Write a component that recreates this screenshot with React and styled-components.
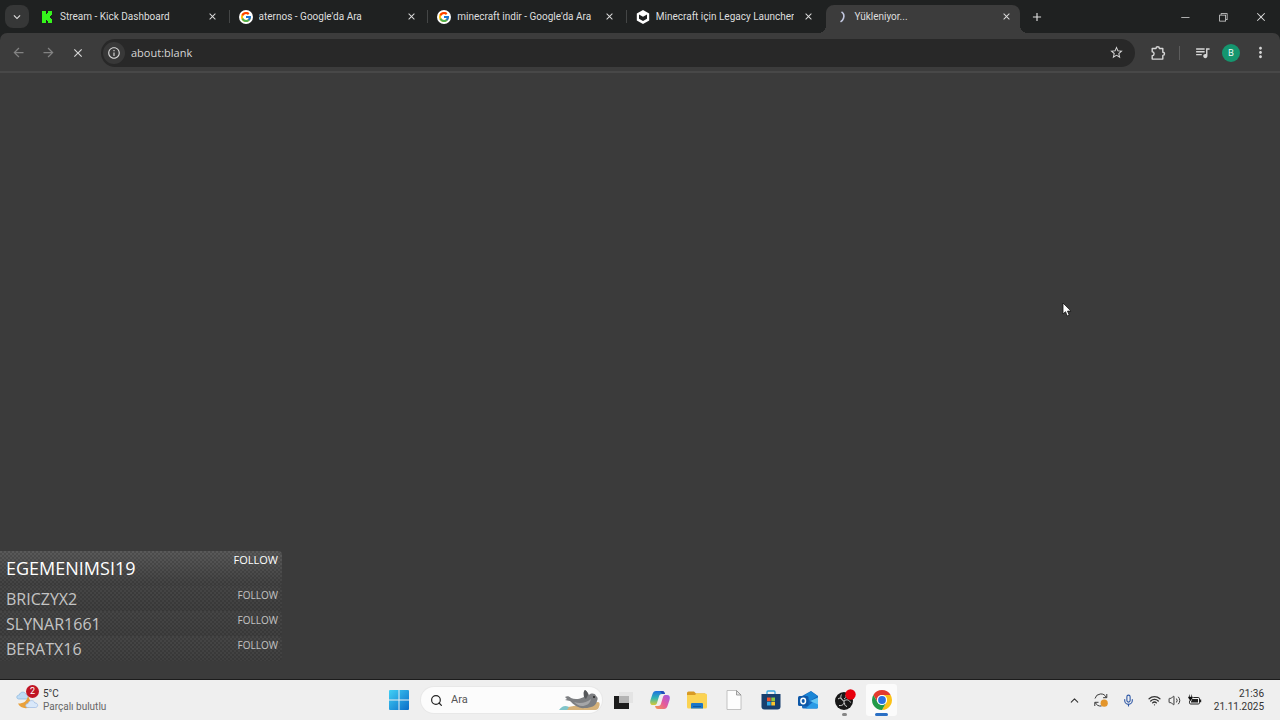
import styled, { createGlobalStyle, css } from "styled-components";
import { FcGoogle } from "react-icons/fc";
import {
    MdArrowBack,
    MdArrowForward,
    MdClose,
    MdInfoOutline,
    MdKeyboardArrowDown,
    MdMoreVert,
    MdAdd,
    MdQueueMusic,
    MdStarBorder,
} from "react-icons/md";
import { VscChromeClose, VscChromeMinimize, VscChromeRestore } from "react-icons/vsc";
import { ChevronUp, Mic, Search, Volume2, Wifi } from "lucide-react";

const tabs = [
    { title: "Stream - Kick Dashboard", icon: "kick" },
    { title: "aternos - Google'da Ara", icon: "google" },
    { title: "minecraft indir - Google'da Ara", icon: "google" },
    { title: "Minecraft için Legacy Launcher", icon: "legacy" },
    { title: "Yükleniyor...", icon: "spinner", active: true },
];

const events = [
    { name: "EGEMENIMSI19", latest: true },
    { name: "BRICZYX2" },
    { name: "SLYNAR1661" },
    { name: "BERATX16" },
];

function Favicon({ icon }) {
    if (icon === "kick") {
        return (
            <svg width="14" height="14" viewBox="0 0 14 14">
                <path fill="#35f41c" d="M2 1h4v3h1V3h1V1h4v4h-1v1h-1v2h1v1h1v4H8v-2H7v-1H6v3H2z" />
            </svg>
        );
    }
    if (icon === "google") {
        return <GoogleBadge><FcGoogle size={12} /></GoogleBadge>;
    }
    if (icon === "legacy") {
        return (
            <svg width="14" height="14" viewBox="0 0 14 14">
                <path fill="#fff" d="M7 0l6.2 3.5v7L7 14 .8 10.5v-7z" />
                <path fill="#1f2121" d="M3 4.600l4 2.200 4-2.200v4.200l-4 2.300-4-2.300z" />
            </svg>
        );
    }
    return (
        <svg width="14" height="14" viewBox="0 0 14 14">
            <path fill="none" stroke="#c3c8e0" strokeWidth="1.6" d="M7.5 1.8c2.3 1.5 2.8 4 2 6.4-.5 1.7-1.6 2.9-3 3.7" />
        </svg>
    );
}

function PuzzleIcon() {
    return (
        <svg width="16" height="16" viewBox="0 0 16 16">
            <path
                fill="none"
                stroke="currentColor"
                strokeWidth="1.400"
                strokeLinejoin="round"
                d="M2.200 3.500H6c0-2.300 3.400-2.300 3.400 0h3.400v3.700c2.300 0 2.300 3.200 0 3.200v3.700H2.200v-3.400c2.500-.2 2.500-3.700 0-3.900z"
            />
        </svg>
    );
}

function WeatherIcon() {
    return (
        <svg width="24" height="26" viewBox="0 0 24 26">
            <path fill="#bfdcf5" stroke="#8ab6de" strokeWidth=".7" d="M2.500 12C0 11.600.3 8 3.300 8 4 4.500 9 4 10 7.500c3 0 3 4.500 0 4.500z" />
            <path fill="#e9a13c" d="M12 9c-1 5-4 7.500-10 7.500 2.500 5.500 11 6.500 14 1z" />
            <path fill="#d9e8fa" stroke="#9cb9e2" strokeWidth=".7" d="M11.500 20.500c-2.700-.3-2.300-4 .5-4 .8-3.800 6-3.800 6.800-.5 3.700-.3 3.700 4.300.7 4.500z" />
        </svg>
    );
}

function WindowsIcon() {
    return (
        <svg width="20" height="20" viewBox="0 0 20 20">
            <defs>
                <linearGradient id="win" x1="0" y1="0" x2="20" y2="20" gradientUnits="userSpaceOnUse">
                    <stop stopColor="#41d0f5" />
                    <stop offset="1" stopColor="#0a6cc8" />
                </linearGradient>
            </defs>
            <path fill="url(#win)" d="M1 0h8.500v9.500H0V1q0-1 1-1zM10.500 0H19q1 0 1 1v8.500h-9.500zM0 10.500h9.500V20H1q-1 0-1-1zM10.500 10.500H20V19q0 1-1 1h-8.500z" />
        </svg>
    );
}

function SealIcon() {
    return (
        <svg width="42" height="24" viewBox="0 0 42 24">
            <path fill="#d6b27a" d="M3 21c7-3 20-4 36-7 2 0 2 3 1 5-1 3-3 3-5 3H6z" />
            <path fill="#7fc4c9" d="M0 22c3-4 6-5 10-3l-2 3z" />
            <path fill="#7d7f82" d="M6 9c2-1 4-1 6 1 4 2 9 1 13-1 0-3-1-5 1-7 2 1 3 3 4 5 2-2 6-2 7 1 2 1 2 3 1 5-1 5-6 7-12 7-6 1-11-3-15-7L6 12l2-1z" />
            <path fill="#a5a6a8" d="M15 14c6 2 12 1 17-3-1 5-5 7-9 7-3 0-6-2-8-4z" />
            <path fill="#55575a" d="M25 9c0-3-1-5 1-7 2 1 3 3 3 5l-2 4z" />
            <circle cx="35" cy="9" r="1" fill="#222" />
        </svg>
    );
}

function TaskViewIcon() {
    return (
        <svg width="20" height="20" viewBox="0 0 20 20">
            <path fill="#1c1c1c" d="M1 6h15v13H1z" />
            <path fill="#e4e4e4" d="M6 2h14v11H6z" />
            <path fill="#b4b4b4" d="M6 6h10v7H6z" />
        </svg>
    );
}

function CopilotIcon() {
    return (
        <svg width="20" height="20" viewBox="0 0 20 20">
            <defs>
                <linearGradient id="copA" x1="0" y1="0" x2="0" y2="1">
                    <stop stopColor="#1f6fe0" />
                    <stop offset=".5" stopColor="#30b5b4" />
                    <stop offset="1" stopColor="#d7cb35" />
                </linearGradient>
                <linearGradient id="copB" x1="1" y1="0" x2="0" y2="1">
                    <stop stopColor="#9a5be8" />
                    <stop offset=".5" stopColor="#e55a9c" />
                    <stop offset="1" stopColor="#f39a4c" />
                </linearGradient>
            </defs>
            <path fill="url(#copA)" d="M6 1h6c2 0 2.400 1.200 3 3H12c-2 0-2.700 1-3.200 3L7 13c-.5 1.500-1.300 2-2.500 2H3c-3 0-3.200-2.500-2.500-5l2-6C3.200 2 4.200 1 6 1z" />
            <path fill="url(#copB)" d="M14 19H8c-2 0-2.400-1.200-3-3h3c2 0 2.700-1 3.200-3L13 7c.5-1.500 1.300-2 2.500-2H17c3 0 3.200 2.500 2.500 5l-2 6c-.7 2-1.700 3-3.500 3z" />
            <path fill="#214dbb" d="M10 1h2c2 0 2.400 1.200 3 3h-3z" />
        </svg>
    );
}

function FolderIcon() {
    return (
        <svg width="20" height="20" viewBox="0 0 20 20">
            <path fill="#d89a24" d="M0 3q0-1.500 1.500-1.500H7l2 2h9v6H0z" />
            <path fill="#fbd353" d="M0 5h8l1.500-1.500h9q1.500 0 1.500 1.500v12q0 1.500-1.500 1.500h-17Q0 18.500 0 17z" />
            <path fill="#1c77c9" d="M4 14q0-1 1-1h10q1 0 1 1v4.500H4z" />
            <path fill="#0f5a9e" d="M6 16h8v1H6z" />
        </svg>
    );
}

function FileIcon() {
    return (
        <svg width="20" height="20" viewBox="0 0 20 20">
            <path fill="#fdfdfd" stroke="#b5b5b5" strokeWidth=".8" d="M3 .5h9.500L17 5v14.500H3z" />
            <path fill="#e3e3e3" stroke="#8c8c8c" strokeWidth=".8" d="M12.500.5V5H17z" />
        </svg>
    );
}

function StoreIcon() {
    return (
        <svg width="20" height="20" viewBox="0 0 20 20">
            <path fill="none" stroke="#3aa8e0" strokeWidth="1.300" d="M6 4V2q0-1 1-1h6q1 0 1 1v2" />
            <path fill="#173f6e" d="M.5 4h19v12.500q0 3-3 3h-13q-3 0-3-3z" />
            <path fill="#f0522d" d="M6 7.500h3.700v3.700H6z" />
            <path fill="#8cc63e" d="M10.300 7.500H14v3.700h-3.700z" />
            <path fill="#2fa9e8" d="M6 11.800h3.700v3.700H6z" />
            <path fill="#fbc42c" d="M10.300 11.800H14v3.700h-3.700z" />
        </svg>
    );
}

function OutlookIcon() {
    return (
        <svg width="20" height="20" viewBox="0 0 20 20">
            <path fill="#1669bd" d="M4 6l9-5 7 5v11q0 1.500-1.500 1.500h-13Q4 18.500 4 17z" />
            <path fill="#1a86d6" d="M7 5l6-3.500L19.500 6 12 11z" />
            <path fill="#2b9be6" d="M20 7.500v9.500q0 1.500-1.500 1.500h-11z" />
            <path fill="#63c6f3" d="M20 7.500v7L12 11z" />
            <rect y="6" width="10.500" height="10" rx="1.500" fill="#0e58a8" />
            <ellipse cx="5.200" cy="11" rx="2.300" ry="2.700" fill="none" stroke="#fff" strokeWidth="1.500" />
        </svg>
    );
}

function ObsIcon() {
    return (
        <svg width="22" height="22" viewBox="0 0 22 22">
            <circle cx="10" cy="12" r="9" fill="#171717" />
            <g fill="none" stroke="#cfcfcf" strokeWidth="1">
                <path d="M10 12c-3-1-4-3.500-2.500-6.500" />
                <path d="M10 12c2.500-2 5.200-1.300 6.500 1.500" />
                <path d="M10 12c.5 3-1.500 5-5 4.500" />
                <path d="M4 10c1.500-1.500 3.500-1 4.500.5M12 6c.5 2-.5 3.500-2 4M13 17.500c-2-.5-2.800-2-2.300-3.700" />
            </g>
            <circle cx="16.500" cy="5.500" r="5.200" fill="#e8000d" />
        </svg>
    );
}

function ChromeIcon() {
    return (
        <svg width="20" height="20" viewBox="0 0 20 20">
            <path fill="#e33b2e" d="M1.340 5A10 10 0 0 1 18.660 5H10a5 5 0 0 0-4.330 7.500z" />
            <path fill="#fbc116" d="M18.660 5A10 10 0 0 1 10 20l4.330-7.500A5 5 0 0 0 10 5z" />
            <path fill="#229a48" d="M10 20A10 10 0 0 1 1.340 5l4.330 7.500a5 5 0 0 0 8.660 0z" />
            <circle cx="10" cy="10" r="5" fill="#fff" />
            <circle cx="10" cy="10" r="3.900" fill="#2c72e0" />
        </svg>
    );
}

function SyncIcon() {
    return (
        <svg width="16" height="16" viewBox="0 0 16 16">
            <g fill="none" stroke="#3a3a3a">
                <path d="M2 6.500A6 6 0 0 1 13.300 5.500M13.800 2v3.700h-3.700" />
                <path d="M8.500 14A6 6 0 0 1 2.300 10.500M1.800 14v-3.700h3.700" />
            </g>
            <circle cx="11.200" cy="11.200" r="3.600" fill="#e3952b" />
        </svg>
    );
}

function BatteryIcon() {
    return (
        <svg width="14" height="12" viewBox="0 0 14 12">
            <rect x="1.500" y="3.500" width="10" height="6.500" rx="1.200" fill="none" stroke="#222" />
            <path fill="#222" d="M3 5h7v3.500H3zM12 5.500h1.200v2.700H12z" />
            <path fill="#111" stroke="#efefef" strokeWidth=".5" d="M0 2.500h1V.5h1v2h1v-2h1v2h1V4L3.500 5.500V7h-2V5.500L0 4z" />
        </svg>
    );
}

const apps = [
    { label: "Görev görünümü", icon: <TaskViewIcon /> },
    { label: "Copilot", icon: <CopilotIcon /> },
    { label: "Dosya Gezgini", icon: <FolderIcon /> },
    { label: "Belge", icon: <FileIcon /> },
    { label: "Microsoft Store", icon: <StoreIcon /> },
    { label: "Outlook", icon: <OutlookIcon /> },
    { label: "OBS Studio", icon: <ObsIcon />, running: true },
    { label: "Google Chrome", icon: <ChromeIcon />, focused: true },
];

function TabStrip() {
    return (
        <Strip>
            <TabSearch aria-label="Sekmelerde ara"><MdKeyboardArrowDown size={14} /></TabSearch>
            <Tabs>
                {tabs.map((tab, i) => (
                    <Tab key={i} $active={tab.active} $divider={i < 3}>
                        <Favicon icon={tab.icon} />
                        <TabTitle>{tab.title}</TabTitle>
                        <CloseTab aria-label="Kapat"><MdClose size={11} /></CloseTab>
                    </Tab>
                ))}
            </Tabs>
            <NewTab aria-label="Yeni sekme"><MdAdd size={14} /></NewTab>
            <WindowButtons>
                <WindowButton aria-label="Küçült"><VscChromeMinimize size={12} /></WindowButton>
                <WindowButton aria-label="Geri yükle"><VscChromeRestore size={12} /></WindowButton>
                <WindowButton aria-label="Pencereyi kapat"><VscChromeClose size={12} /></WindowButton>
            </WindowButtons>
        </Strip>
    );
}

function Toolbar() {
    return (
        <ToolbarShell>
            <Bar>
                <NavGroup>
                    <IconButton aria-label="Geri" disabled><MdArrowBack size={15} /></IconButton>
                    <IconButton aria-label="İleri" disabled><MdArrowForward size={15} /></IconButton>
                    <IconButton aria-label="Durdur"><MdClose size={14} /></IconButton>
                </NavGroup>
                <Omnibox>
                    <SiteInfo aria-label="Site bilgileri"><MdInfoOutline size={14} /></SiteInfo>
                    <Address aria-label="Adres" defaultValue="about:blank" />
                    <IconButton aria-label="Yer işareti"><MdStarBorder size={15} /></IconButton>
                </Omnibox>
                <IconButton aria-label="Uzantılar"><PuzzleIcon /></IconButton>
                <ToolDivider />
                <ToolGroup>
                    <IconButton aria-label="Medya"><MdQueueMusic size={17} /></IconButton>
                    <Avatar aria-label="Profil">B</Avatar>
                    <IconButton aria-label="Menü"><MdMoreVert size={17} /></IconButton>
                </ToolGroup>
            </Bar>
        </ToolbarShell>
    );
}

function Taskbar() {
    return (
        <TaskbarShell>
            <Weather>
                <WeatherArt>
                    <WeatherIcon />
                    <Badge>2</Badge>
                </WeatherArt>
                <WeatherText>
                    <span>5°C</span>
                    <Muted>Parçalı bulutlu</Muted>
                </WeatherText>
            </Weather>
            <Dock>
                <StartButton aria-label="Başlat"><WindowsIcon /></StartButton>
                <SearchBox>
                    <Search size={13} strokeWidth={2.2} />
                    <SearchInput type="text" placeholder="Ara" />
                    <SealIcon />
                </SearchBox>
                {apps.map((app) => (
                    <AppButton key={app.label} aria-label={app.label} $focused={app.focused} $running={app.running}>
                        {app.icon}
                    </AppButton>
                ))}
            </Dock>
            <Tray>
                <TrayButton aria-label="Gizli simgeler"><ChevronUp size={13} /></TrayButton>
                <TrayButton aria-label="Güncelleme"><SyncIcon /></TrayButton>
                <TrayButton aria-label="Mikrofon"><MicIcon size={13} /></TrayButton>
                <Status aria-label="Ağ, ses ve pil">
                    <Wifi size={13} strokeWidth={2.4} />
                    <Volume2 size={13} strokeWidth={1.8} />
                    <BatteryIcon />
                </Status>
                <Clock>
                    <span>21:36</span>
                    <span>21.11.2025</span>
                </Clock>
            </Tray>
        </TaskbarShell>
    );
}

function App() {
    return (
        <Screen>
            <GlobalStyle />
            <TabStrip />
            <Toolbar />
            <Page>
                <EventList>
                    {events.map((event) => (
                        <EventRow key={event.name} $latest={event.latest}>
                            <EventName $latest={event.latest}>{event.name}</EventName>
                            <EventType $latest={event.latest}>FOLLOW</EventType>
                        </EventRow>
                    ))}
                </EventList>
                <Pointer width="11" height="15" viewBox="0 0 11 15">
                    <path fill="#fff" stroke="#111" strokeWidth=".8" d="M1 1v11l2.500-2.300L5.200 14l2-.9-1.700-4H9z" />
                </Pointer>
            </Page>
            <Taskbar />
        </Screen>
    );
}

export default App;

const GlobalStyle = createGlobalStyle`
    * {
        box-sizing: border-box;
    }
    body {
        margin: 0;
        background: #3b3b3b;
        font-family: "Open Sans", "Noto Sans", sans-serif;
    }
    button, input {
        font-family: inherit;
        border: 0;
        padding: 0;
        margin: 0;
        background: none;
        color: inherit;
    }
    svg {
        display: block;
        flex: none;
    }
`;
const Screen = styled.div`
    display: flex;
    flex-direction: column;
    min-height: 100vh;
`;
const Strip = styled.div`
    display: flex;
    align-items: flex-end;
    height: 33px;
    padding-left: 5px;
    background: #1f2121;
    color: #dedede;
`;
const center = css`
    display: flex;
    align-items: center;
    justify-content: center;
    flex: none;
`;
const TabSearch = styled.button`
    ${center}
    width: 24px;
    height: 23px;
    margin: 0 3px 5px 0;
    border-radius: 8px;
    background: #363737;
`;
const Tabs = styled.div`
    display: flex;
    gap: 5px;
    flex: 0 1 988px;
    min-width: 0;
`;
const Tab = styled.div`
    position: relative;
    display: flex;
    align-items: center;
    gap: 6px;
    flex: 1 1 0;
    min-width: 0;
    height: 28px;
    padding: 0 5px 5px 8px;
    ${({ $divider }) => $divider && css`
        &::after {
            content: "";
            position: absolute;
            right: -4px;
            top: 5px;
            width: 1px;
            height: 13px;
            background: #444646;
        }
    `}
    ${({ $active }) => $active && css`
        background: #3c3c3c;
        border-radius: 8px 8px 0 0;
        &::before, &::after {
            content: "";
            position: absolute;
            bottom: 0;
            width: 8px;
            height: 8px;
        }
        &::before {
            left: -8px;
            background: radial-gradient(circle at 0 0, transparent 8px, #3c3c3c 8px);
        }
        &::after {
            right: -8px;
            background: radial-gradient(circle at 100% 0, transparent 8px, #3c3c3c 8px);
        }
    `}
`;
const GoogleBadge = styled.span`
    ${center}
    width: 14px;
    height: 14px;
    border-radius: 50%;
    background: #fff;
`;
const TabTitle = styled.span`
    flex: 1;
    min-width: 0;
    overflow: hidden;
    white-space: nowrap;
    font-family: Roboto, "Open Sans", sans-serif;
    font-size: 10px;
    line-height: 14px;
`;
const CloseTab = styled.button`
    ${center}
    width: 16px;
    height: 16px;
`;
const NewTab = styled.button`
    ${center}
    width: 20px;
    height: 20px;
    margin: 0 auto 6px 7px;
`;
const WindowButtons = styled.div`
    display: flex;
    align-self: stretch;
`;
const WindowButton = styled.button`
    ${center}
    width: 38px;
`;
const ToolbarShell = styled.div`
    background: #1f2121;
`;
const Bar = styled.div`
    display: flex;
    align-items: center;
    height: 40px;
    padding: 1px 9px 0 8px;
    border-bottom: 2px solid #484848;
    border-radius: 7px 7px 0 0;
    background: #3c3c3c;
    color: #d6d6d6;
`;
const NavGroup = styled.div`
    display: flex;
    gap: 10px;
    margin-right: 13px;
`;
const IconButton = styled.button`
    ${center}
    width: 20px;
    height: 20px;
    &:disabled {
        color: #828282;
    }
`;
const Omnibox = styled.div`
    display: flex;
    align-items: center;
    flex: 1;
    height: 28px;
    margin-right: 13px;
    padding: 0 9px 0 2px;
    border-radius: 14px;
    background: #282828;
`;
const SiteInfo = styled.button`
    ${center}
    width: 22px;
    height: 22px;
    border-radius: 50%;
    background: #383838;
`;
const Address = styled.input`
    flex: 1;
    min-width: 0;
    margin-left: 6px;
    font-size: 11px;
    line-height: 16px;
    outline: none;
`;
const ToolDivider = styled.span`
    width: 1px;
    height: 14px;
    margin: 0 12px 0 11px;
    background: #5c5c5c;
`;
const ToolGroup = styled.div`
    display: flex;
    align-items: center;
    gap: 10px;
    margin-right: 1px;
`;
const Avatar = styled.button`
    ${center}
    width: 18px;
    height: 18px;
    border-radius: 50%;
    background: #15966f;
    color: #fff;
    font-size: 9px;
`;
const Page = styled.main`
    position: relative;
    display: flex;
    flex-direction: column;
    justify-content: flex-end;
    flex: 1;
    padding-bottom: 18px;
    background: #3b3b3b;
`;
const EventList = styled.ul`
    width: 282px;
    margin: 0;
    padding: 0;
    list-style: none;
`;
const EventRow = styled.li`
    display: flex;
    justify-content: space-between;
    align-items: flex-start;
    height: ${({ $latest }) => ($latest ? "35px" : "25px")};
    padding: ${({ $latest }) => ($latest ? "2px 4px 0 6px" : "2px 4px 0 6px")};
    border-radius: 0 4px 4px 0;
    background:
        repeating-conic-gradient(rgba(0, 0, 0, 0.14) 0 25%, transparent 0 50%) 0 0 / 4px 4px,
        linear-gradient(${({ $latest }) => ($latest ? "#5a5a5a, #424242" : "#464646, #404040")});
`;
const EventName = styled.span`
    color: ${({ $latest }) => ($latest ? "#fff" : "#c4c4c4")};
    font-size: ${({ $latest }) => ($latest ? "18px" : "16px")};
    font-weight: ${({ $latest }) => ($latest ? 500 : 400)};
    line-height: ${({ $latest }) => ($latest ? "30px" : "22px")};
`;
const EventType = styled.span`
    color: ${({ $latest }) => ($latest ? "#fff" : "#c4c4c4")};
    font-size: ${({ $latest }) => ($latest ? "11px" : "10px")};
    line-height: 14px;
`;
const Pointer = styled.svg`
    position: absolute;
    left: 1062px;
    top: 229px;
`;
const TaskbarShell = styled.footer`
    display: grid;
    grid-template-columns: 1fr auto 1fr;
    align-items: center;
    height: 41px;
    border-top: 1px solid #1c1c1c;
    background: #efefef;
    color: #333;
    font-family: Roboto, "Open Sans", sans-serif;
    font-size: 10px;
    line-height: 13px;
`;
const Weather = styled.button`
    display: flex;
    align-items: center;
    gap: 3px;
    justify-self: start;
    padding-left: 16px;
    text-align: left;
    font-size: inherit;
    line-height: inherit;
`;
const WeatherArt = styled.span`
    position: relative;
`;
const Badge = styled.span`
    ${center}
    position: absolute;
    top: -2px;
    left: 10px;
    width: 13px;
    height: 13px;
    border-radius: 50%;
    background: #c01525;
    color: #fff;
    font-size: 9px;
`;
const WeatherText = styled.span`
    display: flex;
    flex-direction: column;
`;
const Muted = styled.span`
    color: #666;
`;
const Dock = styled.div`
    display: flex;
    align-items: center;
    padding-left: 9px;
`;
const StartButton = styled.button`
    margin-right: 12px;
`;
const SearchBox = styled.label`
    display: flex;
    align-items: center;
    gap: 8px;
    width: 181px;
    height: 26px;
    margin-right: 2px;
    padding: 0 1px 0 9px;
    border-radius: 13px;
    background: #fcfcfc;
    box-shadow: 0 0 0 1px #e8e8e8;
    color: #222;
`;
const SearchInput = styled.input`
    flex: 1;
    min-width: 0;
    font-size: 11px;
    line-height: 16px;
    outline: none;
    &::placeholder {
        color: #555;
        opacity: 1;
    }
`;
const AppButton = styled.button`
    ${center}
    position: relative;
    width: 31px;
    height: 32px;
    margin: 0 3px;
    border-radius: 3px;
    background: ${({ $focused }) => ($focused ? "#fbfbfb" : "none")};
    ${({ $focused, $running }) => ($focused || $running) && css`
        &::after {
            content: "";
            position: absolute;
            bottom: 0;
            width: ${$focused ? "13px" : "5px"};
            height: 3px;
            border-radius: 2px;
            background: ${$focused ? "#2a6fc4" : "#868686"};
        }
    `}
`;
const Tray = styled.div`
    display: flex;
    align-items: center;
    justify-content: flex-end;
    padding-right: 16px;
`;
const TrayButton = styled.button`
    ${center}
    width: 27px;
    height: 26px;
`;
const MicIcon = styled(Mic)`
    color: #2c56a5;
`;
const Status = styled.button`
    ${center}
    gap: 7px;
    margin: 0 12px 0 6px;
`;
const Clock = styled.div`
    display: flex;
    flex-direction: column;
    align-items: flex-end;
`;
